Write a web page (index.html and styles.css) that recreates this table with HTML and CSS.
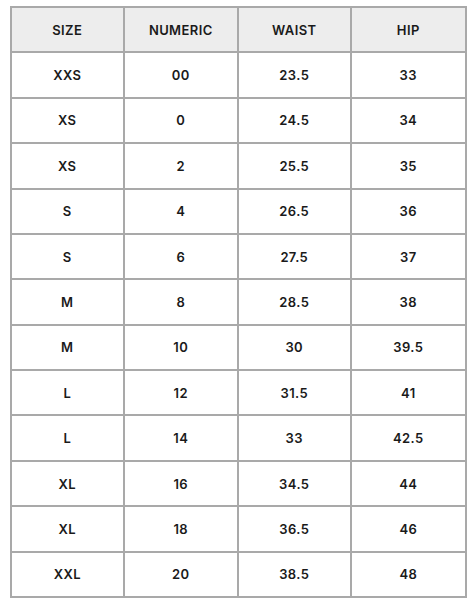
FILE: index.html
```html
<!DOCTYPE html>
<html>
<head>
<meta charset="utf-8">
<link rel="stylesheet" href="styles.css">
</head>
<body>
<div class="chart">
  <div class="cell head">SIZE</div><div class="cell head">NUMERIC</div><div class="cell head">WAIST</div><div class="cell head">HIP</div>
  <div class="cell">XXS</div><div class="cell">00</div><div class="cell">23.5</div><div class="cell">33</div>
  <div class="cell">XS</div><div class="cell">0</div><div class="cell">24.5</div><div class="cell">34</div>
  <div class="cell">XS</div><div class="cell">2</div><div class="cell">25.5</div><div class="cell">35</div>
  <div class="cell">S</div><div class="cell">4</div><div class="cell">26.5</div><div class="cell">36</div>
  <div class="cell">S</div><div class="cell">6</div><div class="cell">27.5</div><div class="cell">37</div>
  <div class="cell">M</div><div class="cell">8</div><div class="cell">28.5</div><div class="cell">38</div>
  <div class="cell">M</div><div class="cell">10</div><div class="cell">30</div><div class="cell">39.5</div>
  <div class="cell">L</div><div class="cell">12</div><div class="cell">31.5</div><div class="cell">41</div>
  <div class="cell">L</div><div class="cell">14</div><div class="cell">33</div><div class="cell">42.5</div>
  <div class="cell">XL</div><div class="cell">16</div><div class="cell">34.5</div><div class="cell">44</div>
  <div class="cell">XL</div><div class="cell">18</div><div class="cell">36.5</div><div class="cell">46</div>
  <div class="cell">XXL</div><div class="cell">20</div><div class="cell">38.5</div><div class="cell">48</div>
</div>
</body>
</html>
```
FILE: styles.css
```css
html, body {
  margin: 0;
  padding: 0;
  background: #ffffff;
}
body {
  padding: 6px 0 0 10px;
  font-family: "Inter", "Lato", "Liberation Sans", sans-serif;
}
.chart {
  width: 457px;
  height: 592px;
  box-sizing: border-box;
  display: grid;
  grid-template-columns: 113fr 115fr 113fr 116fr;
  grid-template-rows: repeat(13, 1fr);
  gap: 2px;
  padding: 2px;
  background: #a9a9a9;
}
.cell {
  background: #ffffff;
  display: flex;
  align-items: center;
  justify-content: center;
  font-size: 13px;
  font-weight: 600;
  color: #1a1a1a;
  letter-spacing: 0.4px;
}
.head {
  background: #ededed;
}
```
